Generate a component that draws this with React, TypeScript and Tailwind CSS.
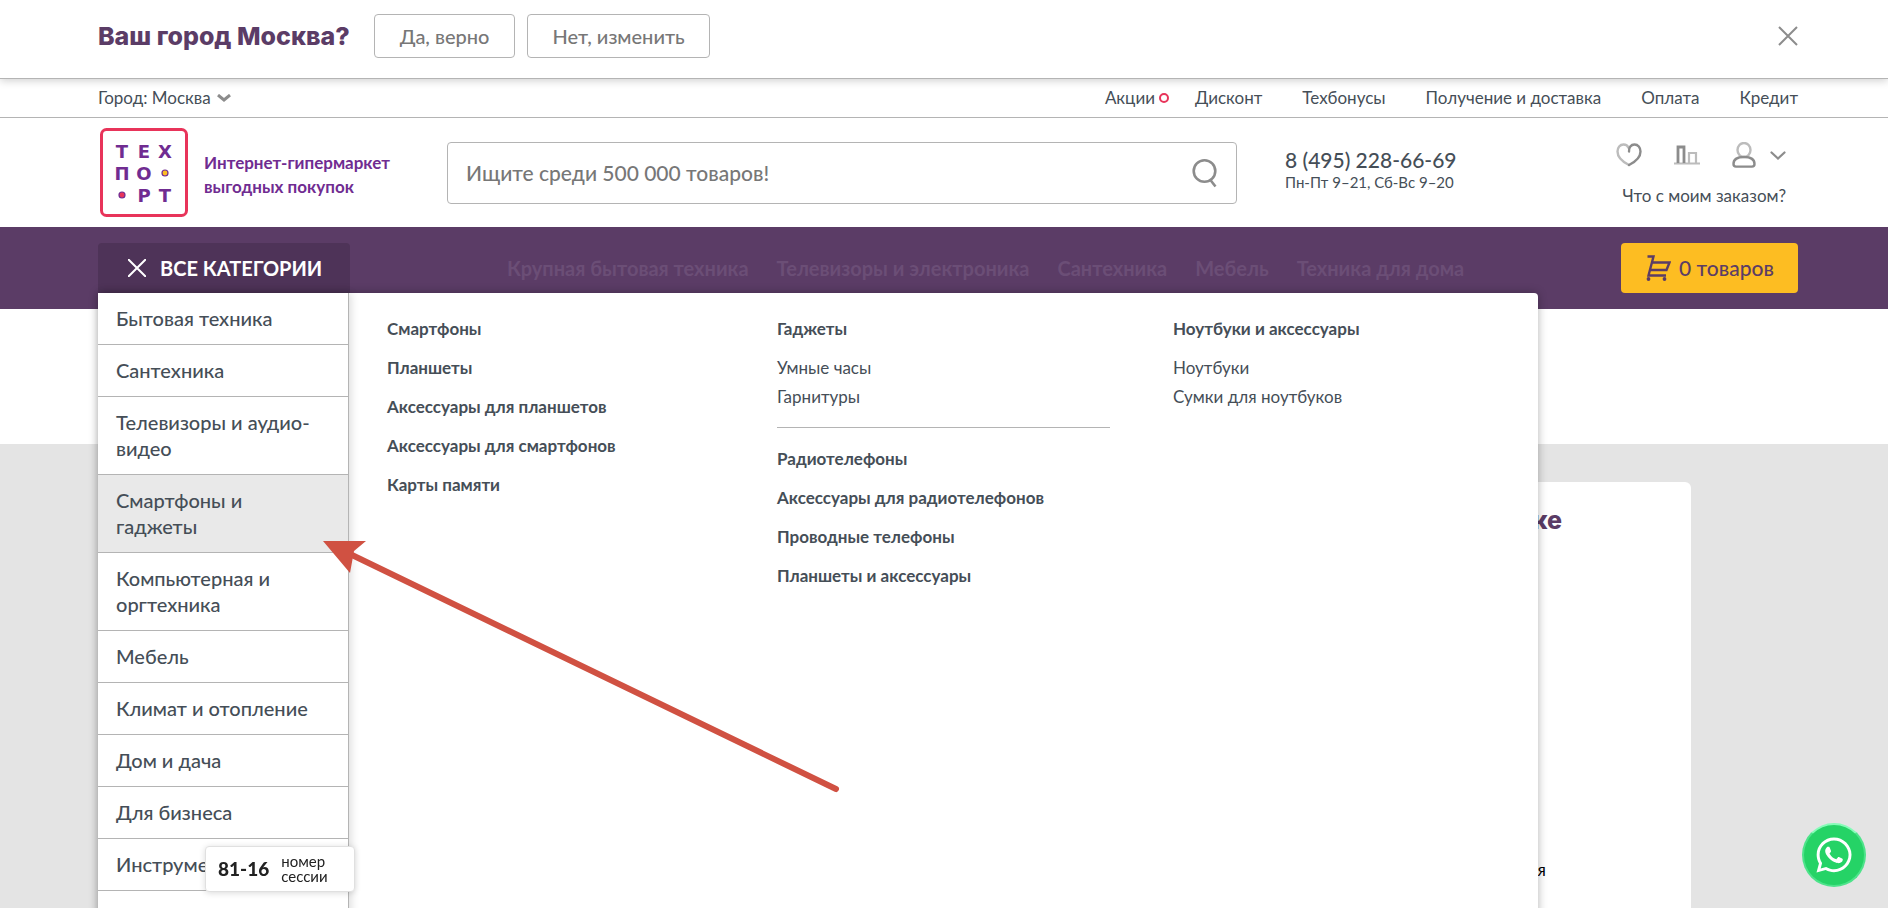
import { useState } from 'react'
import { FaWhatsapp } from 'react-icons/fa'

const topLinks = ['Дисконт', 'Техбонусы', 'Получение и доставка', 'Оплата', 'Кредит']

const navLinks = [
  'Крупная бытовая техника',
  'Телевизоры и электроника',
  'Сантехника',
  'Мебель',
  'Техника для дома',
]

const categories = [
  'Бытовая техника',
  'Сантехника',
  'Телевизоры и аудио-видео',
  'Смартфоны и гаджеты',
  'Компьютерная и оргтехника',
  'Мебель',
  'Климат и отопление',
  'Дом и дача',
  'Для бизнеса',
  'Инструменты',
]

type Group = { title: string; links?: string[]; divider?: boolean }

const columns: Group[][] = [
  [
    { title: 'Смартфоны' },
    { title: 'Планшеты' },
    { title: 'Аксессуары для планшетов' },
    { title: 'Аксессуары для смартфонов' },
    { title: 'Карты памяти' },
  ],
  [
    { title: 'Гаджеты', links: ['Умные часы', 'Гарнитуры'], divider: true },
    { title: 'Радиотелефоны' },
    { title: 'Аксессуары для радиотелефонов' },
    { title: 'Проводные телефоны' },
    { title: 'Планшеты и аксессуары' },
  ],
  [{ title: 'Ноутбуки и аксессуары', links: ['Ноутбуки', 'Сумки для ноутбуков'] }],
]

function Logo() {
  return (
    <svg viewBox="0 0 88 90" className="w-[88px] h-[90px]" role="img" aria-label="Техпорт">
      <rect x="1.500" y="1.500" width="85" height="86" rx="5" fill="#fff" stroke="#e8345a" strokeWidth="3" />
      <g fill="#702c91" fontFamily="DejaVu Sans, sans-serif" fontWeight="700" fontSize="18" textAnchor="middle">
        <text x="22" y="30">Т</text>
        <text x="44" y="30">Е</text>
        <text x="65" y="30">Х</text>
        <text x="22" y="52">П</text>
        <text x="44" y="52">О</text>
        <text x="44" y="74">Р</text>
        <text x="65" y="74">Т</text>
      </g>
      <circle cx="65" cy="45" r="3" fill="#fdbd22" stroke="#702c91" strokeWidth="1.200" />
      <circle cx="22" cy="67" r="3" fill="#e8345a" stroke="#702c91" strokeWidth="1.200" />
    </svg>
  )
}

function CityBanner({ onClose }: { onClose: () => void }) {
  return (
    <div className="relative z-10 flex items-start h-[79px] pt-3.5 pl-[98px] pr-[90px] bg-white border-b border-[#b4b4b4] shadow-[0_2px_8px_rgba(0,0,0,0.18)]">
      <h2 className="leading-[44px] font-['Inter',sans-serif] text-[25px] font-extrabold text-[#5b3c66]">Ваш город Москва?</h2>
      <button onClick={onClose} className="h-11 ml-6 px-[25px] border border-[#b4b4b4] rounded text-xl font-medium text-[#777]">
        Да, верно
      </button>
      <button className="h-11 ml-3 px-6 border border-[#b4b4b4] rounded text-xl font-medium text-[#777]">
        Нет, изменить
      </button>
      <button onClick={onClose} aria-label="Закрыть" className="ml-auto mt-3">
        <svg viewBox="0 0 20 20" className="w-5 h-5" stroke="#8c8c8c" strokeWidth="2">
          <path d="M1 1l18 18M19 1L1 19" />
        </svg>
      </button>
    </div>
  )
}

function TopLine() {
  return (
    <div className="flex items-center justify-between h-[39px] pl-[98px] pr-[90px] border-b border-[#b4b4b4]">
      <button className="flex items-center gap-1.5">
        Город: Москва
        <svg viewBox="0 0 14 8" className="w-3.5 h-2" fill="none" stroke="#8c8c8c" strokeWidth="3">
          <path d="M1 1l6 5 6-5" />
        </svg>
      </button>
      <nav className="flex items-center gap-10">
        <a href="#" className="flex items-center gap-1 -mr-3.5">
          Акции
          <span className="w-2.5 h-2.5 rounded-full border-2 border-[#e8345a]" />
        </a>
        {topLinks.map((link) => (
          <a key={link} href="#">{link}</a>
        ))}
      </nav>
    </div>
  )
}

function UserTools() {
  return (
    <div className="w-[170px] mt-3 mr-3">
      <div className="flex items-center justify-between h-[30px]">
        <a href="#" aria-label="Избранное">
          <svg viewBox="0 0 26 24" className="w-[26px] h-6" fill="none" strokeWidth="2.400" strokeLinecap="round">
            <path d="M13 22C9 20 1.500 15 1.500 8.500C1.500 4.500 4 1.500 7.500 1.500c2.500 0 4.200 1.200 5 3.200" stroke="#bcbcbc" />
            <path d="M13 22c4-2 11.500-7 11.500-13.500 0-4-2.500-7-6-7-3.500 0-5.800 3-5.500 7" stroke="#8c8c8c" />
          </svg>
        </a>
        <a href="#" aria-label="Сравнение" className="ml-8">
          <svg viewBox="0 0 26 20" className="w-[26px] h-5" fill="none" strokeWidth="2.200">
            <path d="M15 18V8h7v10M0 18.500h26" stroke="#bcbcbc" />
            <path d="M4 18V2h6v16" stroke="#8c8c8c" strokeWidth="2.800" />
          </svg>
        </a>
        <button className="flex items-center gap-3.5 ml-8" aria-label="Профиль">
          <svg viewBox="0 0 24 26" className="w-6 h-[26px]" fill="none" strokeWidth="2.400">
            <ellipse cx="12" cy="8" rx="6.500" ry="7" stroke="#bcbcbc" />
            <path d="M1.500 22c0-4.500 4-7 10.500-7s10.500 2.500 10.500 7c0 1.800-.8 2.600-2.500 2.600H4c-1.700 0-2.500-.8-2.500-2.600z" stroke="#8c8c8c" />
          </svg>
          <svg viewBox="0 0 16 9" className="w-4 h-[9px]" fill="none" stroke="#8c8c8c" strokeWidth="2.200" strokeLinecap="round">
            <path d="M1.500 1.500L8 7.500l6.500-6" />
          </svg>
        </button>
      </div>
      <a href="#" className="block mt-3.5 leading-6 text-right whitespace-nowrap">Что с моим заказом?</a>
    </div>
  )
}

function Header() {
  return (
    <header className="flex items-start h-[109px] pt-2.5 pl-[100px] pr-[90px]">
      <a href="#" className="flex items-center">
        <Logo />
        <span className="w-[243px] pl-4 pt-1 leading-6 font-bold text-[#702c91]">
          Интернет-гипермаркет<br />выгодных покупок
        </span>
      </a>
      <form className="flex items-center flex-1 h-[62px] mt-3.5 ml-4 pl-[18px] pr-[18px] border border-[#b4b4b4] rounded">
        <input
          type="text"
          aria-label="Поиск"
          placeholder="Ищите среди 500 000 товаров!"
          className="flex-1 text-[21px] font-medium outline-none placeholder:text-[#777]"
        />
        <button aria-label="Найти" type="button">
          <svg viewBox="0 0 26 30" className="w-[26px] h-[30px]" fill="none" stroke="#8c8c8c" strokeWidth="2.600">
            <circle cx="12.500" cy="13" r="10.800" />
            <path d="M18 21.500l5.500 7" />
          </svg>
        </button>
      </form>
      <div className="w-[379px] shrink-0 mt-5 pl-12">
        <div className="leading-6 text-[21px] font-medium">8 (495) 228-66-69</div>
        <div className="leading-5 text-[15px]">Пн-Пт 9–21, Сб-Вс 9–20</div>
      </div>
      <UserTools />
    </header>
  )
}

function CatalogMenu() {
  const [active, setActive] = useState('Смартфоны и гаджеты')

  return (
    <div className="absolute z-20 top-[66px] left-[98px] right-[350px] h-[640px] flex bg-white rounded-tr shadow-[0_0_10px_rgba(0,0,0,0.3)]">
      <ul className="w-[251px] shrink-0 border-r border-[#b4b4b4] shadow-[2px_0_8px_rgba(0,0,0,0.14)]">
        {categories.map((name) => (
          <li key={name} className="border-b border-[#b4b4b4]">
            <a
              href="#"
              onMouseEnter={() => setActive(name)}
              className={`block pl-[18px] pr-7 pt-3 pb-[13px] leading-[26px] text-xl font-medium ${name === active ? 'bg-[#e9e9e9]' : ''}`}
            >
              {name}
            </a>
          </li>
        ))}
      </ul>
      <div className="grid grid-cols-[390fr_396fr_365fr] flex-1 content-start pl-[38px] pt-6">
        {columns.map((groups, i) => (
          <div key={i} className="flex flex-col gap-[15px] pr-[63px]">
            {groups.map((group) => (
              <div key={group.title}>
                <a href="#" className="block leading-6 font-bold">{group.title}</a>
                {group.links && (
                  <ul className="flex flex-col gap-[5px] mt-[15px]">
                    {group.links.map((link) => (
                      <li key={link} className="leading-6"><a href="#">{link}</a></li>
                    ))}
                  </ul>
                )}
                {group.divider && <hr className="mt-[18px] mb-1 border-[#b4b4b4]" />}
              </div>
            ))}
          </div>
        ))}
      </div>
    </div>
  )
}

function CatalogBar() {
  return (
    <div className="relative flex items-start h-[82px] pt-4 pl-[98px] pr-[90px] bg-[#5b3c66]">
      <button className="flex items-center w-[252px] h-[50px] pl-[30px] gap-3.5 bg-[#4e3358] rounded-t text-xl font-bold text-white whitespace-nowrap">
        <svg viewBox="0 0 18 18" className="w-[18px] h-[18px]" stroke="#fff" strokeWidth="2">
          <path d="M0 0l18 18M18 0L0 18" />
        </svg>
        ВСЕ КАТЕГОРИИ
      </button>
      <nav className="flex gap-7 pl-[157px] leading-[50px] text-xl font-bold text-[#6b4e76] whitespace-nowrap">
        {navLinks.map((link) => (
          <a key={link} href="#">{link}</a>
        ))}
      </nav>
      <button className="flex items-center justify-center w-[177px] h-[50px] ml-auto gap-2 bg-[#fdbd22] rounded text-[21px] font-medium text-[#5b3c66] whitespace-nowrap">
        <svg viewBox="0 0 26 26" className="w-[26px] h-[26px]" fill="none" stroke="#5b3c66" strokeWidth="2.400">
          <path d="M2.500 1.500h6L3.500 20.500H21M7 7.500h17.500l-3 7.500H5.500" />
          <circle cx="3.500" cy="24" r="1.900" fill="#5b3c66" stroke="none" />
          <circle cx="19.500" cy="24" r="1.900" fill="#5b3c66" stroke="none" />
        </svg>
        0 товаров
      </button>
      <CatalogMenu />
    </div>
  )
}

function PageContent() {
  return (
    <main className="mt-[135px] pt-[38px] pl-[98px] pr-[197px] bg-[#e4e4e4]">
      <section className="h-[600px] pt-5 bg-white rounded-md">
        <h2 className="pr-[129px] leading-9 text-right font-['Inter',sans-serif] text-[25px] font-extrabold text-[#5b3c66]">Товары по скидке</h2>
        <p className="mt-[320px] pr-[145px] leading-6 text-right text-black">Акция</p>
      </section>
    </main>
  )
}

export default function App() {
  const [bannerOpen, setBannerOpen] = useState(true)

  return (
    <div className="relative h-screen overflow-hidden bg-white font-['Lato',sans-serif] text-[17px] text-[#454e57]">
      {bannerOpen && <CityBanner onClose={() => setBannerOpen(false)} />}
      <TopLine />
      <Header />
      <CatalogBar />
      <PageContent />

      {/* Pointer to the open category */}
      <svg viewBox="0 0 520 256" className="absolute z-30 left-[322px] top-[540px] w-[520px] h-64 pointer-events-none">
        <path d="M30 15L514 249" stroke="#d05142" strokeWidth="6" strokeLinecap="round" />
        <path d="M1 1h43L32 11l-4 22z" fill="#d05142" />
      </svg>

      <div className="fixed z-30 left-[205px] bottom-4 flex items-center w-[150px] h-[46px] pl-3 gap-3 bg-white border border-[#e0e0e0] rounded shadow-[0_1px_6px_rgba(0,0,0,0.15)] text-[#222]">
        <b className="text-[19px] font-black">81-16</b>
        <span className="text-[15px] leading-[15px]">номер<br />сессии</span>
      </div>

      <a
        href="#"
        aria-label="WhatsApp"
        className="fixed z-30 right-[22px] bottom-[21px] flex items-center justify-center w-16 h-16 rounded-full bg-[#25d366] border-2 border-[#4de38a] border-t-[#86fcb8]"
      >
        <FaWhatsapp className="w-10 h-10 text-white" />
      </a>
    </div>
  )
}
